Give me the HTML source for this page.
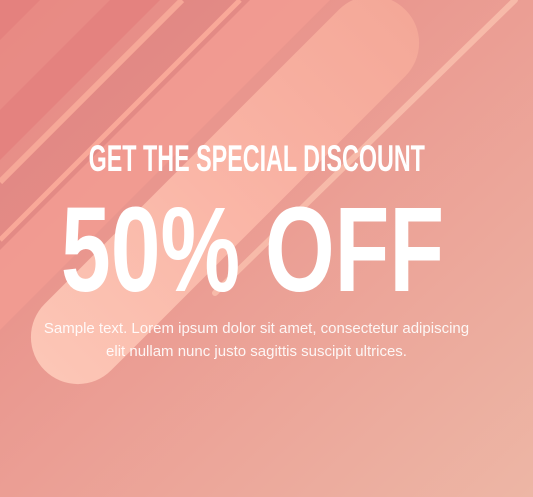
<!DOCTYPE html>
<html><head><style>
html,body{margin:0;padding:0}
body{width:533px;height:497px;overflow:hidden;position:relative;font-family:"Liberation Sans",sans-serif}
svg{position:absolute;left:0;top:0}
.t{position:absolute;color:#fff;white-space:nowrap;left:0;width:533px;text-align:center;transform-origin:50% 50%}
.h1{top:138px;left:-10px;font-weight:bold;font-size:37px;line-height:42px;transform:scaleX(0.63);}
.h2{top:188px;left:-14px;font-weight:bold;font-size:121px;line-height:122px;transform:scaleX(0.74);}
.p{top:317px;left:-10px;font-size:15px;line-height:23px;color:rgba(255,255,255,0.9)}
</style></head><body>
<svg width="533" height="497" viewBox="0 0 533 497">
<defs>
<linearGradient id="bg" x1="0" y1="0" x2="1" y2="1">
<stop offset="0" stop-color="#e58782"/><stop offset="0.5" stop-color="#eb9e94"/><stop offset="1" stop-color="#edb6a5"/>
</linearGradient>
<linearGradient id="pill" x1="0" y1="0" x2="1" y2="0">
<stop offset="0" stop-color="#fcc6b6"/><stop offset="0.6" stop-color="#f9b2a3"/><stop offset="1" stop-color="#f4a898"/>
</linearGradient>
</defs>
<rect width="533" height="497" fill="url(#bg)"/>
<polygon points="0,0 160,0 0,160" fill="#e3807d" opacity="0.8"/>
<polygon points="0,40 40,0 110,0 0,110" fill="#ea8e88" opacity="0.7"/>
<polygon points="180,0 250,0 0,250 0,180" fill="#e08582" opacity="0.6"/>
<polygon points="250,0 330,0 0,330 0,250" fill="#f29c92" opacity="0.8"/>
<line x1="0" y1="182" x2="182" y2="0" stroke="#f6a898" stroke-width="6"/>
<line x1="0" y1="240" x2="240" y2="0" stroke="#f9a898" stroke-width="5"/>
<g transform="translate(225,190) rotate(-45)">
<rect x="-255" y="-47" width="510" height="94" rx="47" fill="url(#pill)"/>
</g>
<line x1="215" y1="293" x2="515" y2="0" stroke="#f7baa9" stroke-width="6" stroke-linecap="round"/>
</svg>
<div class="t h1">GET THE SPECIAL DISCOUNT</div>
<div class="t h2">50% OFF</div>
<div class="t p">Sample text. Lorem ipsum dolor sit amet, consectetur adipiscing<br>elit nullam nunc justo sagittis suscipit ultrices.</div>
</body></html>
